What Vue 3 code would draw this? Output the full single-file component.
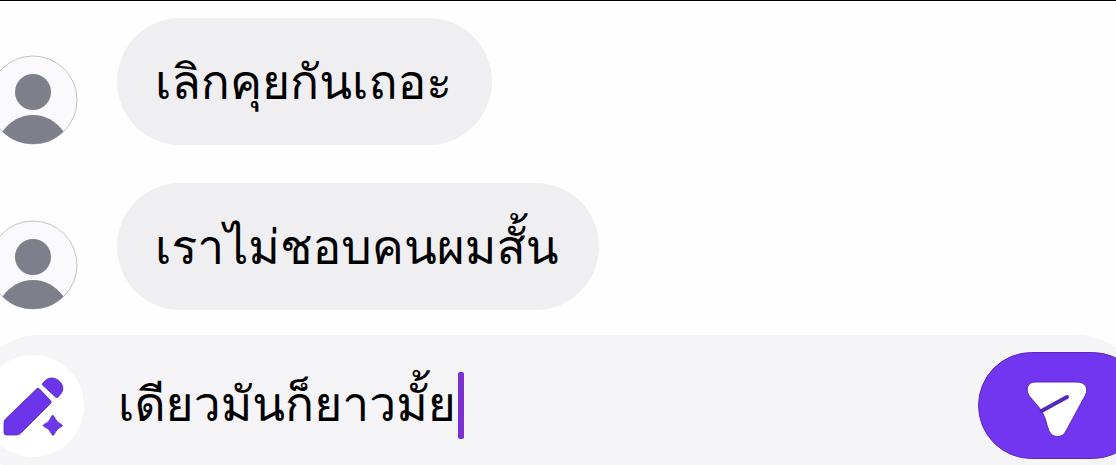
<script setup>
import { ref } from 'vue'

const messages = [
  { id: 1, text: 'เลิกคุยกันเถอะ' },
  { id: 2, text: 'เราไม่ชอบคนผมสั้น' },
]
const draft = ref('เดียวมันก็ยาวมั้ย')
</script>

<template>
  <main class="chat">
    <ul class="thread">
      <li v-for="m in messages" :key="m.id" class="row">
        <svg class="avatar" viewBox="0 0 90 90" aria-hidden="true">
          <circle cx="45" cy="45" r="44" fill="#fafafc" stroke="#c4c4c8" stroke-width="1" />
          <circle cx="45" cy="37" r="18" fill="#7d7f8b" />
          <path d="M14.500 76.500C22 66 33 60 45 60S68 66 75.500 76.500C67 85 57 89 45 89S23 85 14.500 76.500Z" fill="#7d7f8b" />
        </svg>
        <p class="bubble">{{ m.text }}</p>
      </li>
    </ul>

    <form class="composer" @submit.prevent>
      <button type="button" class="pen" aria-label="เขียน">
        <svg viewBox="0 0 102 102" aria-hidden="true">
          <g fill="#6d35ea" stroke="#5127bb" stroke-width="0.800">
            <path d="M54.500 34Q56 32.500 57.500 34L68.500 45.500Q70 47 68.500 48.500L39 78Q37 80 34.500 80H24.500Q22 80 22 77.500V68Q22 65.500 23.500 64Z" />
            <path d="M61 28C65 22.500 71 21.500 76 25C81 28.500 82 34 79.500 38L76 42Q74.800 43 73.500 42L60.500 30Q59.800 29.200 61 28Z" />
            <path d="M70.500 60.500Q71.500 60 72 61.500Q74.500 67.500 79.500 69.500Q81.500 70.500 79.500 71.500Q74.500 73.500 72 79.500Q71 81.500 70 79.500Q67.500 73.500 62 71.500Q60 70.500 62 69.500Q67.500 67.500 69.500 61.500Q70 60 70.500 60.500Z" />
          </g>
        </svg>
      </button>
      <label class="field">
        <input v-model="draft" type="text" aria-label="ข้อความ" />
        <span class="caret"></span>
      </label>
      <button type="submit" class="send" aria-label="ส่ง">
        <svg viewBox="0 0 62 58" aria-hidden="true">
          <path d="M9 2H51C59 2 63 8 59.500 15L40 51C36.500 58.500 26.500 58.500 23 51C20.500 45 20 39 17 33.500C14.500 28 7 21 3 15.500C-1 9 2 2 9 2Z" fill="#fff" stroke="#5429bd" stroke-width="1" />
          <path d="M15.500 31L41 17" stroke="#5429bd" stroke-width="4" stroke-linecap="round" />
        </svg>
      </button>
    </form>
  </main>
</template>

<style>
body {
  margin: 0;
}
</style>

<style scoped>
.chat {
  box-sizing: border-box;
  height: 100vh;
  overflow: hidden;
  border-top: 1px solid #000;
  background: #fefefe;
  color: #000;
  font-family: "Loma", "Liberation Sans", sans-serif;
  font-size: 48px;
}
.thread {
  display: flex;
  flex-direction: column;
  gap: 38px;
  margin: 0;
  padding: 17px 0 25px;
  list-style: none;
}
.row {
  display: flex;
  align-items: flex-end;
  gap: 39px;
  margin-left: -12px;
}
.avatar {
  flex: none;
  width: 90px;
  height: 90px;
}
.bubble {
  margin: 0;
  padding: 28px 40px 27px 38px;
  border-radius: 64px;
  background: #efeff1;
  line-height: 72px;
  white-space: nowrap;
}
.composer {
  display: flex;
  align-items: center;
  gap: 34px;
  margin: 0 -30px;
  padding: 17px 0 17px 12px;
  border-radius: 70px;
  background: #f5f4f6;
}
.pen {
  flex: none;
  width: 102px;
  height: 102px;
  padding: 0;
  border: 0;
  border-radius: 50%;
  background: #fff;
}
.pen svg {
  display: block;
  width: 102px;
  height: 102px;
}
.field {
  display: flex;
  flex: 1;
  align-items: center;
  gap: 2px;
  min-width: 0;
}
.field input {
  box-sizing: border-box;
  field-sizing: content;
  height: 80px;
  padding: 0 0 4px;
  border: 0;
  outline: 0;
  background: none;
  color: inherit;
  font: inherit;
  caret-color: transparent;
}
.caret {
  width: 6px;
  height: 67px;
  border-radius: 2px;
  background: #7c30cf;
}
.send {
  display: flex;
  flex: none;
  align-items: center;
  justify-content: center;
  box-sizing: border-box;
  width: 168px;
  height: 107px;
  padding: 6px 10px 0 0;
  border: 1px solid #5a2bb8;
  border-radius: 54px;
  background: #7336f0;
}
.send svg {
  width: 62px;
  height: 58px;
}
</style>
